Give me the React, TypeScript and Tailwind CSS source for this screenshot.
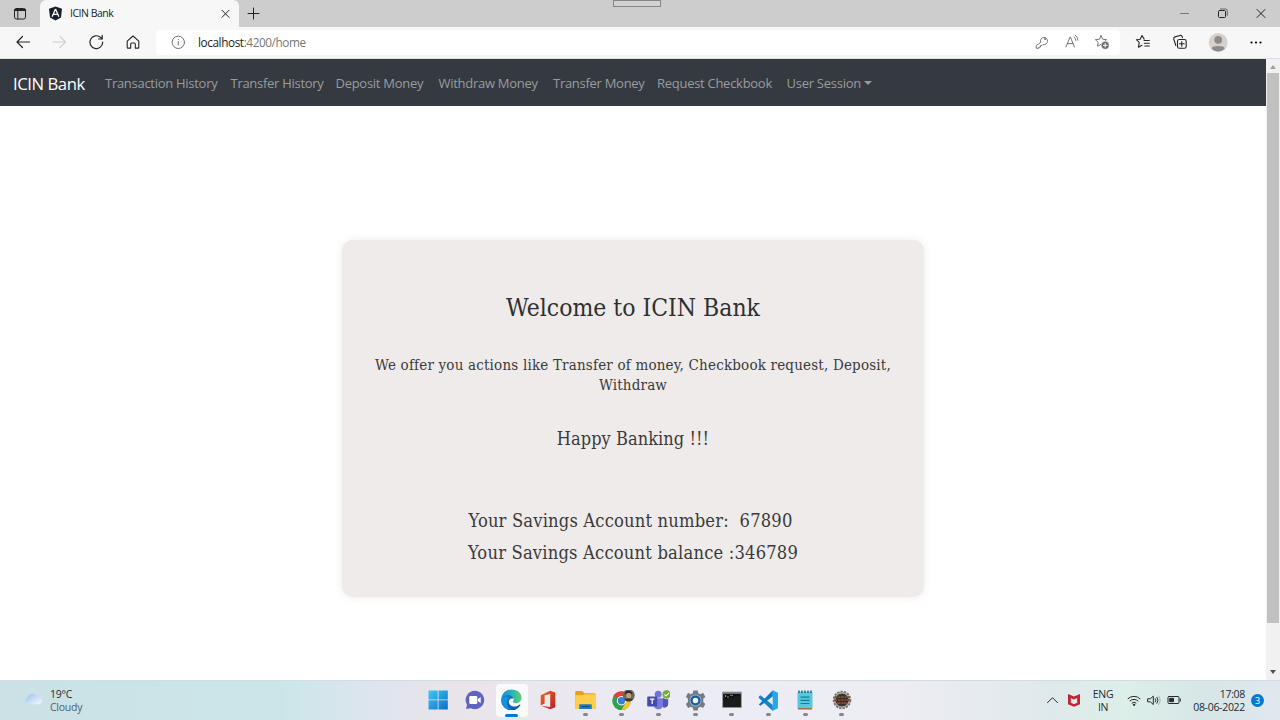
import React from 'react';

type P = { className?: string; children: React.ReactNode; box?: string; w?: number };

function Line({ className = 'size-4', children, box = '0 0 16 16', w = 1 }: P) {
  return (
    <svg className={`shrink-0 ${className}`} viewBox={box} fill="none" stroke="currentColor" strokeWidth={w} strokeLinecap="round" strokeLinejoin="round">
      {children}
    </svg>
  );
}

function Art({ className = 'size-5', children, box = '0 0 20 20' }: P) {
  return <svg className={`shrink-0 ${className}`} viewBox={box}>{children}</svg>;
}

function TabStrip() {
  return (
    <div className="relative flex h-[27px] shrink-0 bg-[#cdcdcd] text-[#222]">
      <div className="flex w-[40px] items-center justify-center">
        <Line className="size-[14px]" box="0 0 14 14" w={1}>
          <rect x="1.5" y="1.5" width="11" height="10.5" rx="1.8" />
          <path d="M2 3h10" strokeWidth="2" />
          <path d="M4.8 4v8" />
        </Line>
      </div>
      <div className="flex w-[199px] items-center rounded-t-[6px] bg-[#f7f7f7] pl-[8px] pr-[8px]">
        <Art className="size-[15px]" box="0 0 15 15">
          <path d="M7.5.5 14 2.8 13 11.5 7.5 14.6 2 11.5 1 2.8Z" fill="#17202a" />
          <path d="M7.5 3 4.1 10.8M7.5 3l3.4 7.8M5.5 8.4h4" stroke="#fff" strokeWidth="1.3" fill="none" />
        </Art>
        <span className="ml-[7px] flex-1 text-[10.5px] tracking-[-0.48px]">ICIN Bank</span>
        <Line className="size-[11px]" box="0 0 11 11" w={1}><path d="m2 2.3 7 7M9 2.3l-7 7" /></Line>
      </div>
      <div className="flex w-[29px] items-center justify-center">
        <Line className="size-[13px]" box="0 0 13 13" w={1}><path d="M6.5 1v11M1 6.5h11" /></Line>
      </div>
      <div className="flex-1" />
      <div className="flex items-center gap-[26px] pr-[13px]">
        <Line className="size-[12px] text-[#777]" box="0 0 12 12"><path d="M1.5 5.5h8" /></Line>
        <Line className="size-[12px]" box="0 0 12 12"><rect x="1.5" y="2.5" width="7" height="7" rx="1" /><path d="M3.5 1h5A1.8 1.8 0 0 1 10.3 2.8v4.6" stroke="#666" /></Line>
        <Line className="size-[12px]" box="0 0 12 12"><path d="m2 1.5 8 8M10 1.5l-8 8" /></Line>
      </div>
      <div className="absolute left-[613px] top-0 h-[7px] w-[48px] border border-[#858585] bg-[#d2d2d2]" />
    </div>
  );
}

const star = 'M7 1.6 8.7 5.2l3.9.5-2.8 2.7.7 3.9L7 10.4l-3.5 1.9.7-3.9L1.4 5.7l3.9-.5Z';

function Toolbar() {
  return (
    <div className="flex h-[32px] shrink-0 items-center border-b border-[#dfe1e4] bg-[#f7f7f7] pb-px text-[#252525]">
      <div className="flex w-[156px] items-center gap-[20px] pl-[15px]">
        <Line className="size-4" w={1.2}><path d="M14.5 8H2M7.5 2.5 2 8l5.5 5.5" /></Line>
        <Line className="size-4 text-[#d0d0d0]" w={1.2}><path d="M2 8h12.5M9 2.5 14.5 8 9 13.5" /></Line>
        <Line className="ml-[1px] size-4" w={1.2}><path d="M14.7 8A6.4 6.4 0 1 1 12.6 3.4L14.2 5M14.2 1.3V5h-3.7" /></Line>
        <Line className="ml-px size-4" w={1.1}><path d="M2.2 7.1 8 2l5.8 5.1v6.3a.7.7 0 0 1-.7.7h-2.8V10a1 1 0 0 0-1-1H6.7a1 1 0 0 0-1 1v4.1H2.9a.7.7 0 0 1-.7-.7Z" /></Line>
      </div>
      <div className="flex h-[25px] w-[964px] items-center rounded-[4px] bg-white pl-[14px] pr-[10px]">
        <Line className="size-4 text-[#707070]"><circle cx="8.3" cy="8.3" r="6.2" /><path d="M8.3 7.6v3.6M8.3 5.4v.2" /></Line>
        <span className="ml-[12px] flex-1 pt-px text-[11.8px] tracking-[-0.42px] text-[#777]"><span className="text-[#222]">localhost</span>:4200/home</span>
        <div className="flex items-center gap-[14px] text-[#777]">
          <Line><path d="M6.5 8.2a3.6 3.6 0 1 1 2.4 2.3l-1 1H6.5V13H5v1.2H2.2v-2.3Z" /><circle cx="11" cy="5" r=".6" /></Line>
          <Line><path d="m2 13 4-10h.4l4 10M3.4 9.6h5.7M10 3a4 4 0 0 1 1.8 3.4M11.3 1.2a6 6 0 0 1 2.6 5" /></Line>
          <Line className="size-4"><path d={star} /><circle cx="11.2" cy="11.3" r="4" fill="#686868" stroke="#fff" strokeWidth=".6" /><path d="M11.2 9.5v3.6M9.4 11.3H13" stroke="#fff" /></Line>
        </div>
      </div>
      <div className="flex items-center pl-[15px]">
        <Line className="size-4" w={1.1}><path d="M9.2 5.1 7 1.5 5.2 5.2l-3.8.5 2.8 2.7-.7 4.8L7 11.3M9 6.5h5.3M9.3 9.3h5M9.8 12h4.5" /></Line>
        <Line className="ml-[21px] size-4" w={1.1}><rect x="5.5" y="5.5" width="8.7" height="8.7" rx="1.8" /><path d="M9.8 7.5v4.7M7.5 9.8h4.7M3.8 11.5 1.8 5.2a1.8 1.8 0 0 1 1.2-2.3l5-1.4a1.8 1.8 0 0 1 2.2 1.2l.3 1" /></Line>
        <Art className="ml-[20px] size-[20px]"><circle cx="10.2" cy="10.5" r="9.4" fill="#d4d1ce" /><circle cx="10.2" cy="7.8" r="3.9" fill="#8e8a87" /><path d="M3.5 16.3c1.2-3 12.2-3 13.4 0-3.6 4.4-10 4.4-13.4 0Z" fill="#8e8a87" /></Art>
        <Art className="ml-[20px] size-4" box="0 0 16 16"><circle cx="3.5" cy="8.5" r="1.1" /><circle cx="8" cy="8.5" r="1.1" /><circle cx="12.5" cy="8.5" r="1.1" /></Art>
      </div>
    </div>
  );
}

const links = [
  ['Transaction History', 'w-[125.5px]'],
  ['Transfer History', 'w-[105px]'],
  ['Deposit Money', 'w-[103px]'],
  ['Withdraw Money', 'w-[114.5px]'],
  ['Transfer Money', 'w-[104px]'],
  ['Request Checkbook', 'w-[129.5px]'],
];

function Site() {
  return (
    <main className="flex min-w-0 flex-1 flex-col bg-white">
      <nav className="flex h-[47px] shrink-0 items-center whitespace-nowrap bg-[#343a40] pl-[13px] pt-[2px] text-[#999c9f]">
        <span className="w-[92px] text-[16.7px] tracking-[-0.45px] text-white">ICIN Bank</span>
        {links.map(([name, width]) => <span key={name} className={`${width} text-[13px] tracking-[-0.28px]`}>{name}</span>)}
        <span className="text-[13px] tracking-[-0.26px]">User Session</span>
        <span className="mb-[2px] ml-[3px] border-x-4 border-t-4 border-x-transparent border-t-current" />
      </nav>
      <section className="mx-auto mt-[134px] h-[357px] w-[582px] rounded-[11px] bg-[#efebea] text-center font-['DejaVu_Serif_Condensed','DejaVu_Serif',serif] text-[#3a3a3a] shadow-[0_0_10px_rgba(0,0,0,0.08)]">
        <h1 className="mt-[50px] text-[24.5px] leading-9 tracking-[0px] text-[#303030]">Welcome to ICIN Bank</h1>
        <p className="mx-auto mt-[29px] w-[550px] text-[15px] leading-5 tracking-[0.19px]">We offer you actions like Transfer of money, Checkbook request, Deposit,<br />Withdraw</p>
        <p className="mt-[32px] text-[18px] leading-6 tracking-[0.07px]">Happy Banking !!!</p>
        <p className="mr-[5px] mt-[58px] whitespace-pre text-[18.2px] leading-6 tracking-[0.17px]">Your Savings Account number:  67890</p>
        <p className="mt-[8px] text-[18.2px] leading-6 tracking-[0.19px]">Your Savings Account balance :346789</p>
      </section>
    </main>
  );
}

function ScrollBar() {
  return (
    <div className="flex w-[14px] shrink-0 flex-col items-center bg-[#f1f1f1]">
      <div className="flex h-[14px] items-center pt-[2px]"><span className="border-x-[3px] border-b-[4px] border-x-transparent border-b-[#a0a0a0]" /></div>
      <div className="h-[550px] w-[12px] bg-[#c1c1c1]" />
      <div className="flex flex-1 items-end pb-[6px]"><span className="border-x-[3px] border-t-[4px] border-x-transparent border-t-[#505050]" /></div>
    </div>
  );
}

const apps: { id: string; on?: boolean; run?: boolean; art: React.ReactNode }[] = [
  { id: 'start', art: <Art><defs><linearGradient id="win" x2="1" y2="1"><stop stopColor="#42c8f5" /><stop offset="1" stopColor="#0870c8" /></linearGradient></defs><path d="M.5.5h9.2v9H.5Zm10 0h9.3v9h-9.3ZM.5 10.3h9.2v9.2H.5Zm10 0h9.3v9.2h-9.3Z" fill="url(#win)" /></Art> },
  { id: 'chat', art: <Art><path d="M10 .8a9.2 9.2 0 1 1-4.2 17.4L1 19l1-4.2A9.2 9.2 0 0 1 10 .8Z" fill="#6263be" /><rect x="4.3" y="6" width="8" height="8" rx="1.2" fill="#fff" /><path d="m12.7 9.2 3-2.3v6.4l-3-2.3Z" fill="#fff" /></Art> },
  { id: 'edge', on: true, art: <Art className="size-[21px]"><defs><linearGradient id="e1" x2="1"><stop stopColor="#168fd6" /><stop offset=".5" stopColor="#25b5bd" /><stop offset="1" stopColor="#60d065" /></linearGradient><linearGradient id="e2" y2="1"><stop stopColor="#1685d2" /><stop offset="1" stopColor="#0b4fa0" /></linearGradient></defs><path d="M.4 9C1.2 3.6 5.2.4 10.1.4c5.8 0 9.5 3.8 9.5 8 0 3-2.4 5.1-5.1 5.1-2.6 0-3.6-1-3.1-1.8 1.6-2.1.3-5-3-5C4.7 6.7 1.6 8 .4 9Z" fill="url(#e1)" /><path d="M.4 9C1.6 6.9 4 5.8 6.5 5.8c3.3 0 5.3 1.6 5.3 3.6-2.4-1-4.3.4-4.3 2.8 0 4 5.5 6.3 10 2.8.7-.5 1.2.1.8.7A9.7 9.7 0 0 1 .4 9Z" fill="url(#e2)" /><path d="M7.6 9C4.5 10.5 4.5 17 9.9 19.4 2.6 19.5-.6 13.5.4 9c1.7-2.1 5.3-2.1 7.2 0Z" fill="#1594dc" /></Art> },
  { id: 'office', art: <Art><defs><linearGradient id="off" y2="1"><stop stopColor="#ef6a25" /><stop offset="1" stopColor="#b81f22" /></linearGradient></defs><path d="m12.2.8 5.1 1.7v14.8l-5.1 2-9-3.4 9 1V3.9L6.6 5.2v8.2l-3.9 2V5.2Z" fill="url(#off)" /></Art> },
  { id: 'files', run: true, art: <Art className="size-[21px]"><path d="M1 1h6l2 2h9.5a1 1 0 0 1 1 1v14H.2V2A1 1 0 0 1 1 1Z" fill="#e4a218" /><path d="M.2 5h7l2-1h10.3v14H.2Z" fill="#ffcf4b" /><path d="M4 18v-3.5a1 1 0 0 1 1-1h10a1 1 0 0 1 1 1V18Z" fill="#197bc5" /><path d="M6.5 15.8h7" stroke="#0a508e" /></Art> },
  { id: 'chrome', run: true, art: <Art className="h-[22px] w-[26px]" box="0 0 26 22"><g transform="translate(1.5 -1.2)"><circle cx="11" cy="12" r="9.3" fill="#2fa24c" /><path d="M11 12 2.8 7.2A9.5 9.5 0 0 1 19.2 7.2H11Z" fill="#df4237" /><path d="M11 12V7.2h8.2A9.5 9.5 0 0 1 11 21.3l4-7.1Z" fill="#fbc52d" /><circle cx="11" cy="12" r="4.7" fill="#fff" /><circle cx="11" cy="12" r="3.7" fill="#397ddd" /></g><g transform="translate(1 -1)"><circle cx="18.7" cy="6.3" r="6" fill="#6d6758" /><path d="M14.8 5.5c0-5 7.5-5 7.6 0l-1.2-1.1-4.8.1Z" fill="#25231f" /><ellipse cx="18.7" cy="7" rx="2.4" ry="3.3" fill="#c79b80" /><path d="M14.2 10.4c2-1.5 7-1.5 9 0-2.2 2.8-6.8 2.8-9 0Z" fill="#363b3b" /></g></Art> },
  { id: 'teams', run: true, art: <Art className="h-[22px] w-[24px]" box="0 0 24 22"><g transform="translate(1.2 -.7)"><circle cx="11" cy="5" r="3.5" fill="#7075d5" /><circle cx="18" cy="7" r="2.5" fill="#5258b5" /><path d="M7 9h9v7a5 5 0 0 1-9 2Z" fill="#757add" /><path d="M15.7 9H21v5c0 3.7-2.8 5-5.3 4Z" fill="#5057b6" /><rect x="0" y="7.3" width="10" height="10" rx="1" fill="#454bad" /><path d="M2.8 9.8h4.4M5 9.8v5" stroke="#fff" strokeWidth="1.2" /><circle cx="19.4" cy="5" r="4.5" fill="#70ad29" stroke="#eeeef4" strokeWidth=".7" /><path d="m17.2 5.1 1.6 1.6 3-3" stroke="#fff" strokeWidth="1.2" fill="none" /></g></Art> },
  { id: 'settings', run: true, art: <Art className="size-[21px]"><path d="m8 .5-.6 2.7-2 .9L3 2.7.8 6.5l2 1.9v3l-2 2L3 17.2l2.5-1.3 2 .9.6 2.7h4l.6-2.7 2-.9 2.5 1.3 2.2-3.8-2-2v-3l2-1.9L17.2 2.7l-2.5 1.4-2-.9-.6-2.7Z" fill="#727c85" /><circle cx="10" cy="10" r="5.6" fill="#a6b3bd" /><circle cx="10" cy="10" r="4.8" fill="#175ba1" /><circle cx="10" cy="10" r="2.6" fill="#f7fbff" /></Art> },
  { id: 'terminal', run: true, art: <Art><path d="M.7 2h18.6v15.5H.7Z" fill="#101010" stroke="#8f9498" strokeWidth=".7" /><path d="M1 3h18" stroke="#ccc" /><path d="m2.8 5 1.4 1-1.4 1M5 7h2M8 5.3h3" stroke="#bbb" strokeWidth=".7" fill="none" /><path d="M1 10 19 5v12H1Z" fill="#303030" opacity=".35" /></Art> },
  { id: 'code', run: true, art: <Art className="size-[21px]"><path d="m.8 6.3 1.5-1.4 11.8 9.3V20L.8 7.7Z" fill="#1585cd" /><path d="M.8 13.7 14.1.3V6L2.3 15.1Z" fill="#087dc4" /><path d="m14 .3 5 2.3v14.8l-5 2.4Z" fill="#27a6ec" /></Art> },
  { id: 'notes', run: true, art: <Art><rect x="2.5" y="1.7" width="15" height="17" rx="1" fill="#5ac8db" /><path d="M3 18.8h14" stroke="#a76c48" strokeWidth="1.5" /><path d="M4 3V.4M7 3V.4M10 3V.4M13 3V.4M16 3V.4" stroke="#0b5782" strokeWidth="1.3" /><path d="M5.5 7.2h9M5.5 10.4h9M5.5 13.5h9" stroke="#147a9d" strokeWidth="1.2" /></Art> },
  { id: 'tools', run: true, art: <Art><circle cx="10" cy="10" r="8.3" fill="#aaa49f" stroke="#74716f" strokeWidth="2" strokeDasharray="2.2 1.2" /><circle cx="10" cy="10" r="7" fill="#3a3430" stroke="#c2bfbb" /><path d="M2.5 7.2h15M2.2 10h15.6M5.5 13h9" stroke="#7e4d32" strokeWidth="2" strokeDasharray="3 .8 2 .6" /><path d="M4 8.7h12M3.5 11.3h13" stroke="#352a22" strokeWidth=".8" /></Art> },
];

function TaskBar() {
  return (
    <footer className="flex h-[40px] shrink-0 border-t border-[#d3dcdf] bg-[linear-gradient(90deg,#cbe1e5_0%,#cce6e8_22%,#dfe5ee_30%,#e9e4ea_35%,#ececf5_55%,#ededf3_70%,#dfe9eb_82%,#dcefe9_88%,#d7e6e7_94%,#dfe8ef_100%)] text-[#252b2e]">
      <div className="flex w-[420px] items-center pl-[23px]">
        <Art className="mb-[4px] h-[14px] w-[21px]" box="0 0 22 16"><defs><linearGradient id="cloud" y2="1"><stop stopColor="#9ebfed" /><stop offset="1" stopColor="#f4f9ff" /></linearGradient></defs><path d="M4 14a4 4 0 0 1 0-7.6c1.6-5.7 9.3-6 11.6-.5 7-.2 6.7 7.3 1 8.1Z" fill="url(#cloud)" /></Art>
        <div className="ml-[6px] text-[10.5px] leading-[13px] tracking-[-0.25px]"><div>19°C</div><div className="text-[#536066]">Cloudy</div></div>
      </div>
      <div className="flex items-center">
        {apps.map((a) => (
          <div key={a.id} className="flex w-[36.7px] justify-center">
            <div className={a.on ? 'flex h-[33px] w-[32px] flex-col items-center justify-between rounded-[4px] bg-[#faf9fc] pt-[5px]' : 'flex h-[33px] w-[32px] flex-col items-center justify-between pt-[6px]'}>
              {a.art}
              {a.on && <i className="h-[3px] w-[13px] rounded-full bg-[#0b75ca]" />}
              {a.run && <i className="mb-px h-[3px] w-[5px] rounded-full bg-[#85868b]" />}
            </div>
          </div>
        ))}
      </div>
      <div className="ml-auto flex items-center pr-[16px] text-[10.5px] leading-[13px] tracking-[-0.3px]">
        <Line className="size-[13px]" box="0 0 13 13"><path d="m1.5 8.7 5-5 5 5" /></Line>
        <Art className="ml-[8px] size-[14px]" box="0 0 14 14"><path d="m1 0 6 2.4L13 0v10.3L7 12.7l-6-2.4Z" fill="#c22331" /><path d="m3.8 4 3.2 1.5L10.2 4v4.8L7 10.2 3.8 8.8Z" fill="#e3e9eb" /></Art>
        <div className="ml-[10px] w-[24px] text-center">ENG<br />IN</div>
        <Line className="ml-[12px] size-[14px]" box="0 0 14 14"><path d="M1 4.7a8.5 8.5 0 0 1 12 0M3 6.9a5.7 5.7 0 0 1 8 0M5 9a2.8 2.8 0 0 1 4 0" /><circle cx="7" cy="10.8" r=".7" fill="currentColor" /></Line>
        <Line className="ml-[6px] size-[14px]" box="0 0 14 14"><path d="M1 4.8h2.3l3-2.7v8.4l-3-2.7H1ZM8.3 4.7a2.6 2.6 0 0 1 0 3.2M10 3.3a5 5 0 0 1 0 6" /><path d="M11.7 2.1a7 7 0 0 1 0 8.4" stroke="#aaa" /></Line>
        <Line className="mb-[2px] ml-[6px] h-[10px] w-[14px]" box="0 0 14 10"><rect x="1" y="1.5" width="11" height="7" rx="1" /><path d="M3 3.3h3.5v3.4H3Z" fill="currentColor" /><path d="M13.3 4v2" /></Line>
        <div className="ml-[10px] w-[54px] whitespace-nowrap text-right">17:08<br />08-06-2022</div>
        <span className="ml-[6px] grid size-[13px] place-items-center rounded-full bg-[#0877ce] text-[9px] text-white">3</span>
      </div>
    </footer>
  );
}

export default function App() {
  return (
    <div className="flex h-[720px] w-[1280px] flex-col overflow-hidden font-['Open_Sans','Noto_Sans',sans-serif]">
      <TabStrip />
      <Toolbar />
      <div className="flex h-[621px] shrink-0">
        <Site />
        <ScrollBar />
      </div>
      <TaskBar />
    </div>
  );
}
